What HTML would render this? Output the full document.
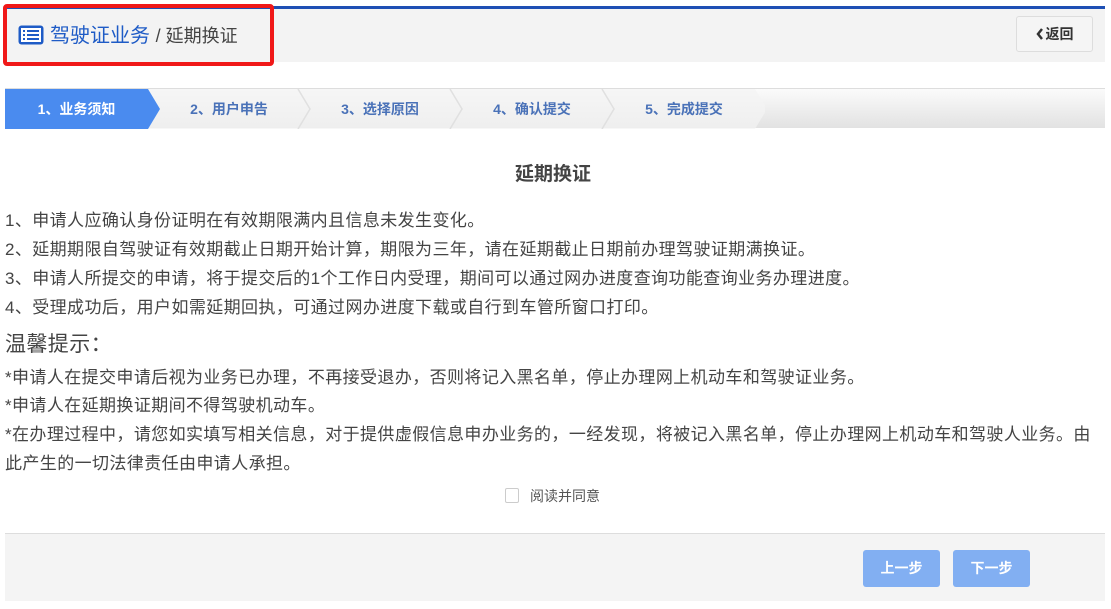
<!DOCTYPE html>
<html><head><meta charset="utf-8"><style>
*{margin:0;padding:0;box-sizing:border-box}
body{width:1111px;height:609px;background:#fff;font-family:"Liberation Sans","Microsoft YaHei","Noto Sans CJK SC",sans-serif;position:relative;overflow:hidden;color:#444}
.abs{position:absolute}
.topline{left:5px;top:6px;width:1100px;height:3px;background:#1e4fb4}
.hdr{left:5px;top:9px;width:1100px;height:53px;background:#f3f3f3}
.red{left:3px;top:4px;width:271px;height:62px;border:4px solid #f01818;border-radius:4px}
.crumb{left:18px;top:22px;font-size:20px;line-height:28px;color:#1e5bc6;white-space:nowrap}
.crumb span{color:#444;font-size:18px}
.back{left:1016px;top:16px;width:77px;height:36px;border:1px solid #ddd;border-radius:3px;background:#f5f5f5;font-size:14px;font-weight:bold;color:#333;text-align:center;line-height:34px}
.steps{left:5px;top:88px;width:1100px;height:40px;background:linear-gradient(#fbfbfb,#e2e2e2);border-top:1px solid #ddd}
.step{position:absolute;top:0;height:40px;line-height:40px;font-size:14px;font-weight:bold;color:#4a72b8;text-align:center}
.p{left:5px;font-size:17px;letter-spacing:0.4px;color:#444;white-space:nowrap;line-height:20px}
.foot{left:5px;top:533px;width:1100px;height:68px;background:#f4f4f4;border-top:1px solid #ddd}
.btn{top:550px;width:77px;height:37px;background:#82aff2;border-radius:3px;color:#fff;font-weight:bold;font-size:14px;text-align:center;line-height:37px}
</style></head><body>
<div class="abs topline"></div>
<div class="abs hdr"></div>
<div class="abs red"></div>
<div class="abs crumb"><svg width="26" height="20" viewBox="0 0 26 20" style="vertical-align:-3px;margin-right:6px"><rect x="0.5" y="0.5" width="25" height="19" rx="3" fill="#1e5bc6"/><rect x="3" y="3" width="20" height="14" fill="#fff"/><g fill="#1e5bc6"><rect x="5" y="5" width="2" height="2"/><rect x="9" y="5" width="12" height="2"/><rect x="5" y="9" width="2" height="2"/><rect x="9" y="9" width="12" height="2"/><rect x="5" y="13" width="2" height="2"/><rect x="9" y="13" width="12" height="2"/></g></svg>驾驶证业务 <span>/ 延期换证</span></div>
<div class="abs back"><svg width="8" height="12" viewBox="0 0 8 12" style="vertical-align:-1px;margin-right:2px"><polyline points="6,1 2,6 6,11" fill="none" stroke="#333" stroke-width="2.5"/></svg>返回</div>
<div class="abs steps">
<svg class="abs" style="left:0;top:0" width="760" height="40">
<polygon points="155,0 750,0 762,20 750,40 155,40 143,40 155,20 143,0" fill="#f4f4f4" opacity="0.7"/>
<polyline points="293,0 305,20 293,40" fill="none" stroke="#e0e0e0" stroke-width="1.5"/>
<polyline points="445,0 457,20 445,40" fill="none" stroke="#e0e0e0" stroke-width="1.5"/>
<polyline points="597,0 609,20 597,40" fill="none" stroke="#e0e0e0" stroke-width="1.5"/>
<polygon points="0,0 143,0 155,20 143,40 0,40" fill="#4a8bef"/>
</svg>
<div class="step" style="left:0;width:143px;color:#fff">1、业务须知</div>
<div class="step" style="left:155px;width:138px">2、用户申告</div>
<div class="step" style="left:305px;width:140px">3、选择原因</div>
<div class="step" style="left:457px;width:140px">4、确认提交</div>
<div class="step" style="left:609px;width:140px">5、完成提交</div>
</div>
<div class="abs" style="left:515px;top:159px;font-size:19px;font-weight:bold;color:#444">延期换证</div>
<div class="abs p" style="top:211px">1、申请人应确认身份证明在有效期限满内且信息未发生变化。</div>
<div class="abs p" style="top:240px">2、延期期限自驾驶证有效期截止日期开始计算，期限为三年，请在延期截止日期前办理驾驶证期满换证。</div>
<div class="abs p" style="top:269px">3、申请人所提交的申请，将于提交后的1个工作日内受理，期间可以通过网办进度查询功能查询业务办理进度。</div>
<div class="abs p" style="top:298px">4、受理成功后，用户如需延期回执，可通过网办进度下载或自行到车管所窗口打印。</div>
<div class="abs p" style="top:332px;font-size:21px;line-height:26px">温馨提示：</div>
<div class="abs p" style="top:368px">*申请人在提交申请后视为业务已办理，不再接受退办，否则将记入黑名单，停止办理网上机动车和驾驶证业务。</div>
<div class="abs p" style="top:396px">*申请人在延期换证期间不得驾驶机动车。</div>
<div class="abs p" style="top:425px">*在办理过程中，请您如实填写相关信息，对于提供虚假信息申办业务的，一经发现，将被记入黑名单，停止办理网上机动车和驾驶人业务。由</div>
<div class="abs p" style="top:454px">此产生的一切法律责任由申请人承担。</div>
<div class="abs" style="left:505px;top:488px;width:14px;height:15px;border:1px solid #ccc;border-radius:2px"></div>
<div class="abs" style="left:530px;top:486px;font-size:14px;color:#555">阅读并同意</div>
<div class="abs foot"></div>
<div class="abs btn" style="left:863px">上一步</div>
<div class="abs btn" style="left:953px">下一步</div>
</body></html>
